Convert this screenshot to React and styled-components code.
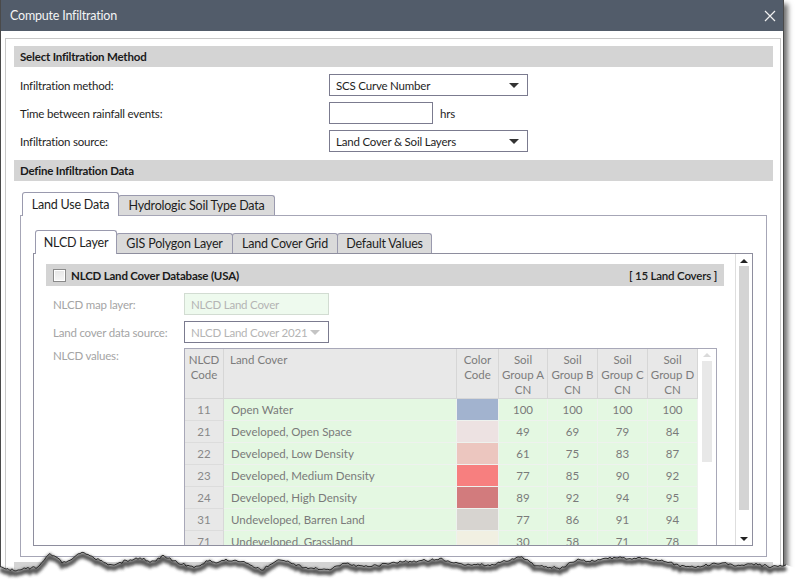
import React from 'react';
import styled, { createGlobalStyle, css } from 'styled-components';

const GlobalStyle = createGlobalStyle`
  html, body {
    margin: 0;
    padding: 0;
    background: #fff;
  }
  body {
    font-family: Lato, "Noto Sans", sans-serif;
    font-size: 11.5px;
    letter-spacing: -0.2px;
    color: #1e1e1e;
  }
  * { box-sizing: border-box; }
`

const Page = styled.div`
  position: relative;
  width: 795px;
  height: 587px;
  overflow: hidden;
  background: #fff;
`

const Window = styled.div`
  width: 784px;
  height: 600px;
  border-left: 1px solid #4a4a4a;
  border-right: 1px solid #4a4a4a;
  background: #fff;
  box-shadow: 4px 4px 5px rgba(0, 0, 0, 0.55);
  display: flex;
  flex-direction: column;
`

const TitleBar = styled.div`
  height: 31px;
  flex: none;
  background: #525c6a;
  color: #f4f4f4;
  font-size: 12.5px;
  display: flex;
  align-items: center;
  justify-content: space-between;
  padding: 0 7px 0 9px;
`

const Body = styled.div`
  padding: 7px 2px 0 4px;
`

const Frame = styled.div`
  border: 1px solid #c8c8c8;
  padding: 7px 7px 0 8px;
`

const SectionHeader = styled.div`
  height: 21px;
  margin-top: ${p => p.top || 0}px;
  background: #d4d4d4;
  padding-left: 6px;
  display: flex;
  align-items: center;
  font-weight: 700;
  color: #1a1a1a;
`

const Form = styled.div`
  display: flex;
  flex-direction: column;
  gap: 6px;
  padding: 7px 0 8px 6px;
`

const Row = styled.div`
  display: flex;
  align-items: center;
  height: 22px;
`

const Label = styled.div`
  width: ${p => p.w}px;
  flex: none;
  color: ${p => (p.dim ? '#a4a4a4' : '#1e1e1e')};
`

const Field = styled.div`
  width: ${p => p.w}px;
  height: 22px;
  border: 1px solid ${p => (p.soft ? '#d2dcd2' : '#7b7b8f')};
  background: ${p => (p.soft ? '#eefaee' : '#fff')};
  color: ${p => (p.dim ? '#b4b4b4' : '#1e1e1e')};
  display: flex;
  align-items: center;
  justify-content: space-between;
  padding: 0 8px 0 6px;
  white-space: nowrap;
  overflow: hidden;
`

const Arrow = styled.span`
  width: 0;
  height: 0;
  flex: none;
  border-left: 5px solid transparent;
  border-right: 5px solid transparent;
  border-top: 5px solid ${p => (p.dim ? '#c4c4c4' : '#333')};
`

const Unit = styled.span`
  margin-left: 7px;
`

const TabStrip = styled.div`
  display: flex;
  align-items: flex-end;
  height: 23px;
  padding-left: ${p => p.indent}px;
  margin-top: ${p => p.top || 0}px;
  position: relative;
  z-index: 1;
`

const Tab = styled.div`
  width: ${p => p.w}px;
  border: 1px solid #9a9aae;
  border-bottom: none;
  border-radius: 3px 3px 0 0;
  display: flex;
  align-items: center;
  justify-content: center;
  font-size: 12.5px;
  color: #1e1e1e;
  margin-left: ${p => (p.first ? 0 : -1)}px;
  ${p => p.active ? css`
    height: 24px;
    margin-bottom: -1px;
    background: #fff;
    z-index: 2;
  ` : css`
    height: 20px;
    background: #dadada;
  `}
`

const OuterPanel = styled.div`
  margin: 0 6px;
  height: 342px;
  border: 1px solid #a6a6b6;
  padding: 14px 13px 0 12px;
`

const InnerPanel = styled.div`
  height: 293px;
  border: 1px solid #8e8e9e;
  background: #fff;
  display: flex;
  overflow: hidden;
`

const Content = styled.div`
  flex: 1;
  padding: 10px 11px 0 12px;
  display: flex;
  flex-direction: column;
`

const GroupBar = styled.div`
  height: 22px;
  flex: none;
  background: #d4d4d4;
  display: flex;
  align-items: center;
  padding: 0 7px;
  font-weight: 700;
  color: #1a1a1a;
`

const Check = styled.span`
  width: 13px;
  height: 13px;
  border: 1px solid #8a8a8a;
  background: linear-gradient(#e6e6e6, #f6f6f6);
  box-shadow: inset 0 0 0 1px #fff;
  margin-right: 5px;
`

const Count = styled.span`
  margin-left: auto;
  font-weight: 600;
`

const Fields = styled.div`
  display: flex;
  flex-direction: column;
  gap: 6px;
  padding: 7px 0 0 7px;
`

const ValuesRow = styled.div`
  display: flex;
  margin-top: -1px;
`

const ValuesLabel = styled(Label)`
  padding-top: 1px;
`

const Table = styled.div`
  width: 533px;
  border: 1px solid #a8a8b8;
  border-bottom: none;
  display: flex;
  color: #7c7c7c;
  letter-spacing: 0;
`

const Grid = styled.div`
  display: grid;
  grid-template-columns: 39px 233px 42px 49px 50px 50px 50px;
  grid-template-rows: 50px;
  grid-auto-rows: 22px;
`

const HeadCell = styled.div`
  background: #e8e8e8;
  border-right: 1px solid #d6d6d6;
  border-bottom: 1px solid #d6d6d6;
  line-height: 15px;
  padding-top: 3px;
  text-align: ${p => (p.left ? 'left' : 'center')};
  padding-left: ${p => (p.left ? 6 : 0)}px;
  white-space: pre-line;
`

const Cell = styled.div`
  display: flex;
  align-items: center;
  justify-content: ${p => (p.left ? 'flex-start' : 'center')};
  padding-left: ${p => (p.left ? 7 : 0)}px;
  background: ${p => p.bg || '#e4f8e2'};
  border-right: 1px solid ${p => (p.code ? '#d8d8d8' : '#eef2ee')};
  border-bottom: 1px solid ${p => (p.code ? '#dcdcdc' : '#eef2ee')};
  color: ${p => (p.code ? '#888' : '#7a7a7a')};
`

const TableScroll = styled.div`
  width: 18px;
  flex: none;
  display: flex;
  flex-direction: column;
  align-items: center;
  padding-top: 4px;
`

const TinyUp = styled.span`
  width: 0;
  height: 0;
  border-left: 4px solid transparent;
  border-right: 4px solid transparent;
  border-bottom: 4px solid #dadada;
`

const TableThumb = styled.div`
  width: 10px;
  height: 101px;
  margin-top: 4px;
  background: #e8e8e8;
`

const ScrollBar = styled.div`
  width: 17px;
  flex: none;
  border-left: 1px solid #dedede;
  display: flex;
  flex-direction: column;
  align-items: center;
  padding-top: 5px;
`

const ScrollUp = styled.span`
  width: 0;
  height: 0;
  border-left: 4px solid transparent;
  border-right: 4px solid transparent;
  border-bottom: 4px solid #222;
`

const ScrollDown = styled.span`
  width: 0;
  height: 0;
  border-left: 4px solid transparent;
  border-right: 4px solid transparent;
  border-top: 4px solid #222;
  margin-top: 27px;
`

const Thumb = styled.div`
  width: 10px;
  height: 244px;
  margin-top: 3px;
  background: #d4d4d4;
`

const Tear = styled.svg`
  position: absolute;
  left: 0;
  top: 540px;
`

const landCovers = [
  { code: 11, name: 'Open Water', color: '#a2b3cf', cn: [100, 100, 100, 100] },
  { code: 21, name: 'Developed, Open Space', color: '#ede2e2', cn: [49, 69, 79, 84] },
  { code: 22, name: 'Developed, Low Density', color: '#ecc6bf', cn: [61, 75, 83, 87] },
  { code: 23, name: 'Developed, Medium Density', color: '#f77f7f', cn: [77, 85, 90, 92] },
  { code: 24, name: 'Developed, High Density', color: '#d27b7d', cn: [89, 92, 94, 95] },
  { code: 31, name: 'Undeveloped, Barren Land', color: '#d7d4d0', cn: [77, 86, 91, 94] },
  { code: 71, name: 'Undeveloped, Grassland', color: '#f1f0e2', cn: [30, 58, 71, 78] },
]

const headers = [
  { text: 'NLCD\nCode' },
  { text: 'Land Cover', left: true },
  { text: 'Color\nCode' },
  { text: 'Soil\nGroup A\nCN' },
  { text: 'Soil\nGroup B\nCN' },
  { text: 'Soil\nGroup C\nCN' },
  { text: 'Soil\nGroup D\nCN' },
]

// rough outline of the torn paper edge, in page coordinates
const tearPoints = [
  [0, 568], [15, 570], [38, 567], [45, 559], [50, 554], [56, 557], [63, 563], [72, 560],
  [80, 553], [90, 555], [100, 561], [112, 566], [125, 561], [140, 558], [152, 562],
  [163, 556], [172, 560], [185, 565], [198, 567], [208, 560], [215, 562], [228, 560],
  [245, 562], [262, 570], [278, 560], [290, 562], [305, 568], [330, 569], [345, 563],
  [358, 566], [380, 565], [400, 562], [420, 561], [440, 559], [460, 564], [490, 565],
  [515, 558], [522, 557], [535, 566], [560, 568], [578, 560], [590, 561], [610, 558],
  [640, 558], [660, 560], [685, 567], [700, 566], [720, 563], [735, 565], [755, 564],
  [770, 567], [787, 566],
]

function tearLine(offset) {
  const pts = []
  for (let x = 0; x <= 787; x += 2) {
    let i = 0
    while (i < tearPoints.length - 2 && tearPoints[i + 1][0] < x) i++
    const [x0, y0] = tearPoints[i]
    const [x1, y1] = tearPoints[i + 1]
    const t = Math.min(1, Math.max(0, (x - x0) / (x1 - x0)))
    const n = Math.sin(x * 12.9898) * 43758.5453
    const jitter = (n - Math.floor(n) - 0.5) * 2.6
    pts.push(`${x},${(y0 + (y1 - y0) * t + jitter - 540 + offset).toFixed(1)}`)
  }
  return 'M' + pts.join(' L')
}

function TornEdge() {
  const line = tearLine(0)
  return (
    <Tear width="795" height="47" viewBox="0 0 795 47">
      <defs>
        <filter id="tearBlur" x="-5%" y="-50%" width="110%" height="200%">
          <feGaussianBlur stdDeviation="1.6" />
        </filter>
      </defs>
      <path d={`${line} L795,28 L795,47 L0,47 Z`} fill="#fff" />
      <path d={tearLine(3)} stroke="#3a3a3a" strokeWidth="5" fill="none" filter="url(#tearBlur)" opacity="0.85" />
      <path d={line} stroke="#2a2a2a" strokeWidth="1" fill="none" />
    </Tear>
  )
}

function CloseIcon() {
  return (
    <svg width="12" height="12" viewBox="0 0 12 12">
      <path d="M1 1 L11 11 M11 1 L1 11" stroke="#f0f0f0" strokeWidth="1.2" />
    </svg>
  )
}

export default function App() {
  return (
    <Page>
      <GlobalStyle />
      <Window>
        <TitleBar>
          <span>Compute Infiltration</span>
          <CloseIcon />
        </TitleBar>
        <Body>
          <Frame>
            <SectionHeader>Select Infiltration Method</SectionHeader>
            <Form>
              <Row>
                <Label w={309}>Infiltration method:</Label>
                <Field w={199}>SCS Curve Number<Arrow /></Field>
              </Row>
              <Row>
                <Label w={309}>Time between rainfall events:</Label>
                <Field w={104} />
                <Unit>hrs</Unit>
              </Row>
              <Row>
                <Label w={309}>Infiltration source:</Label>
                <Field w={199}>Land Cover &amp; Soil Layers<Arrow /></Field>
              </Row>
            </Form>
            <SectionHeader>Define Infiltration Data</SectionHeader>

            <TabStrip top={11} indent={8}>
              <Tab first active w={97}>Land Use Data</Tab>
              <Tab w={157}>Hydrologic Soil Type Data</Tab>
            </TabStrip>
            <OuterPanel>
              <TabStrip indent={2}>
                <Tab first active w={82}>NLCD Layer</Tab>
                <Tab w={117}>GIS Polygon Layer</Tab>
                <Tab w={106}>Land Cover Grid</Tab>
                <Tab w={95}>Default Values</Tab>
              </TabStrip>
              <InnerPanel>
                <Content>
                  <GroupBar>
                    <Check />
                    NLCD Land Cover Database (USA)
                    <Count>[ 15 Land Covers ]</Count>
                  </GroupBar>
                  <Fields>
                    <Row>
                      <Label dim w={131}>NLCD map layer:</Label>
                      <Field soft dim w={145}>NLCD Land Cover</Field>
                    </Row>
                    <Row>
                      <Label dim w={131}>Land cover data source:</Label>
                      <Field dim w={145}>NLCD Land Cover 2021<Arrow dim /></Field>
                    </Row>
                    <ValuesRow>
                      <ValuesLabel dim w={131}>NLCD values:</ValuesLabel>
                      <Table>
                        <Grid>
                          {headers.map(h => (
                            <HeadCell key={h.text} left={h.left}>{h.text}</HeadCell>
                          ))}
                          {landCovers.map(lc => (
                            <React.Fragment key={lc.code}>
                              <Cell code bg="#e8e8e8">{lc.code}</Cell>
                              <Cell left>{lc.name}</Cell>
                              <Cell bg={lc.color} />
                              {lc.cn.map((v, i) => (
                                <Cell key={i}>{v}</Cell>
                              ))}
                            </React.Fragment>
                          ))}
                        </Grid>
                        <TableScroll>
                          <TinyUp />
                          <TableThumb />
                        </TableScroll>
                      </Table>
                    </ValuesRow>
                  </Fields>
                </Content>
                <ScrollBar>
                  <ScrollUp />
                  <Thumb />
                  <ScrollDown />
                </ScrollBar>
              </InnerPanel>
            </OuterPanel>
            <SectionHeader top={5} />
          </Frame>
        </Body>
      </Window>
      <TornEdge />
    </Page>
  )
}
